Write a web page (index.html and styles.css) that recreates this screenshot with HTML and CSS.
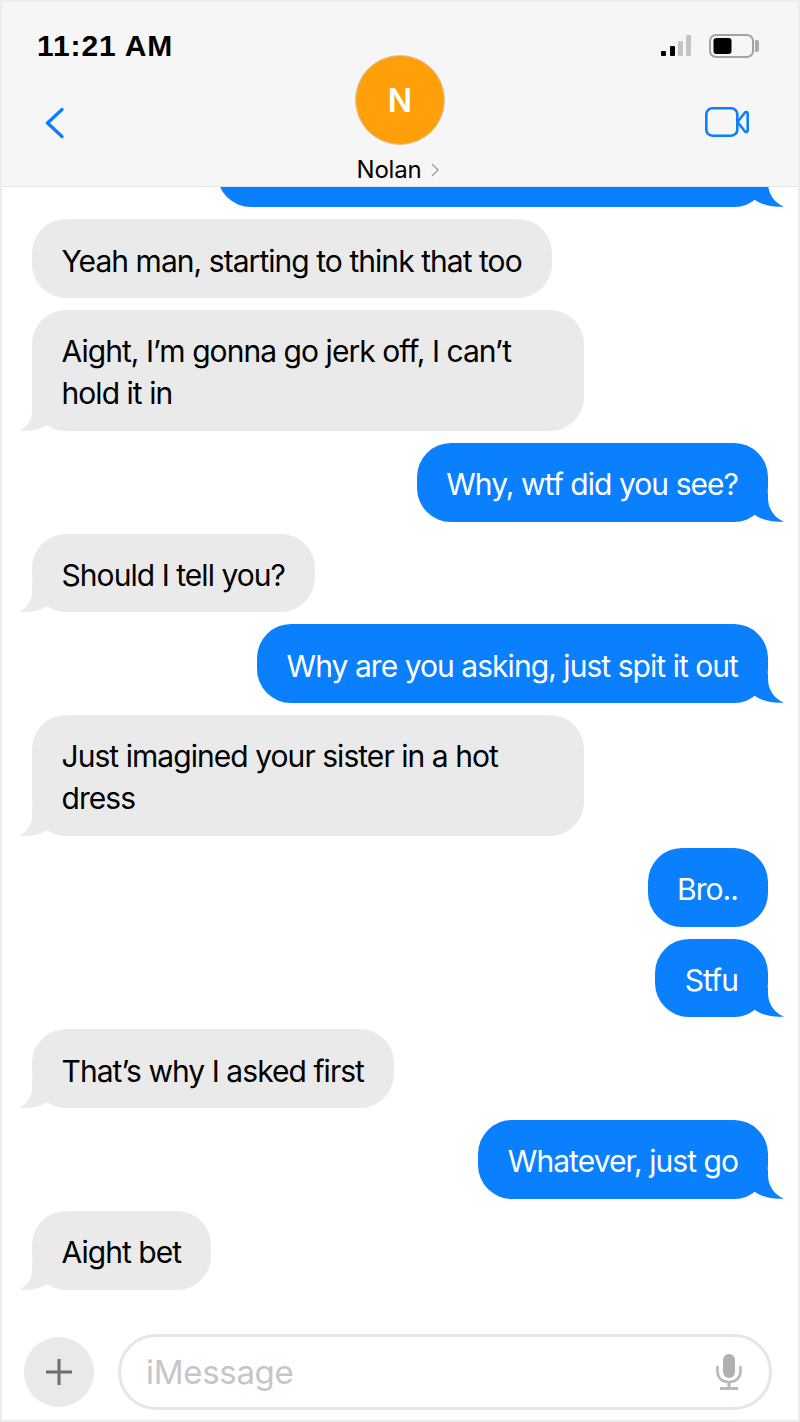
FILE: index.html
```html
<!DOCTYPE html>
<html lang="en">
<head>
  <meta charset="UTF-8" />
  <title>Nolan - Messages</title>
  <link rel="stylesheet" href="styles.css">
</head>
<body>
  <div class="phone">
    <!-- Top bar -->
    <header class="topbar">
      <div class="status">
        <span class="time">11:21 AM</span>
        <div class="status-icons">
          <svg width="30" height="22" viewBox="0 0 30 22">
            <rect x="0" y="16" width="5" height="5" rx="1" fill="#000" />
            <rect x="9" y="11" width="5" height="10" rx="1" fill="#000" />
            <rect x="17" y="6" width="5" height="15" rx="1" fill="#c4c4c4" />
            <rect x="25" y="0" width="5" height="21" rx="1" fill="#c4c4c4" />
          </svg>
          <svg width="50" height="24" viewBox="0 0 50 24">
            <rect x="1" y="1" width="43" height="22" rx="6" fill="none" stroke="#a3a3a3" stroke-width="2" />
            <rect x="4.500" y="4" width="18" height="16" rx="3" fill="#000" />
            <path d="M46 6h2a2 2 0 0 1 2 2v8a2 2 0 0 1-2 2h-2z" fill="#aaa" />
          </svg>
        </div>
      </div>
      <div class="nav">
        <svg class="nav-back" width="20" height="32" viewBox="0 0 20 32">
          <path d="M17 2.500L2.500 16L17 29.500" fill="none" stroke="#0a80ff" stroke-width="3.400" stroke-linecap="round" stroke-linejoin="round" />
        </svg>
        <div class="contact">
          <div class="avatar">N</div>
          <div class="contact-name">
            Nolan
            <svg width="8" height="14" viewBox="0 0 8 14">
              <path d="M1 1l6 6l-6 6" fill="none" stroke="#9a9a9a" stroke-width="1.300" />
            </svg>
          </div>
        </div>
        <svg class="nav-video" width="44" height="30" viewBox="0 0 44 30">
          <rect x="1.300" y="1.300" width="31" height="27.400" rx="6" fill="none" stroke="#0a80ff" stroke-width="2.600" />
          <path d="M32.500 15L40 5.500C41 4.500 42.700 5 42.700 6.500V23.500C42.700 25 41 25.500 40 24.500Z" fill="none" stroke="#0a80ff" stroke-width="2.600" stroke-linejoin="round" />
        </svg>
      </div>
    </header>

    <!-- Conversation -->
    <main class="thread">
      <div class="msg sent cut">&nbsp;<svg class="tail" width="34" height="30" viewBox="0 0 34 30"><path d="M18 0V6C18 16 24 26 34 29.500C26 30.500 13 29 5 23L0 15Z" /></svg></div>
      <div class="msg got">Yeah man, starting to think that too</div>
      <div class="msg got">Aight, I’m gonna go jerk off, I can’t hold it in<svg class="tail" width="30" height="30" viewBox="0 0 30 30"><path d="M12 0V10C12 18 8 25 0 29.500C10 30.500 20 29 27 24L30 15Z" /></svg></div>
      <div class="msg sent">Why, wtf did you see?<svg class="tail" width="34" height="30" viewBox="0 0 34 30"><path d="M18 0V6C18 16 24 26 34 29.500C26 30.500 13 29 5 23L0 15Z" /></svg></div>
      <div class="msg got">Should I tell you?<svg class="tail" width="30" height="30" viewBox="0 0 30 30"><path d="M12 0V10C12 18 8 25 0 29.500C10 30.500 20 29 27 24L30 15Z" /></svg></div>
      <div class="msg sent">Why are you asking, just spit it out<svg class="tail" width="34" height="30" viewBox="0 0 34 30"><path d="M18 0V6C18 16 24 26 34 29.500C26 30.500 13 29 5 23L0 15Z" /></svg></div>
      <div class="msg got">Just imagined your sister in a hot dress<svg class="tail" width="30" height="30" viewBox="0 0 30 30"><path d="M12 0V10C12 18 8 25 0 29.500C10 30.500 20 29 27 24L30 15Z" /></svg></div>
      <div class="msg sent">Bro..</div>
      <div class="msg sent">Stfu<svg class="tail" width="34" height="30" viewBox="0 0 34 30"><path d="M18 0V6C18 16 24 26 34 29.500C26 30.500 13 29 5 23L0 15Z" /></svg></div>
      <div class="msg got">That’s why I asked first<svg class="tail" width="30" height="30" viewBox="0 0 30 30"><path d="M12 0V10C12 18 8 25 0 29.500C10 30.500 20 29 27 24L30 15Z" /></svg></div>
      <div class="msg sent">Whatever, just go<svg class="tail" width="34" height="30" viewBox="0 0 34 30"><path d="M18 0V6C18 16 24 26 34 29.500C26 30.500 13 29 5 23L0 15Z" /></svg></div>
      <div class="msg got">Aight bet<svg class="tail" width="30" height="30" viewBox="0 0 30 30"><path d="M12 0V10C12 18 8 25 0 29.500C10 30.500 20 29 27 24L30 15Z" /></svg></div>
    </main>

    <!-- Input -->
    <footer class="composer">
      <div class="plus">
        <svg width="30" height="30" viewBox="0 0 30 30">
          <path d="M15 2V28M2 15H28" stroke="#6f6f6f" stroke-width="3" />
        </svg>
      </div>
      <div class="input">
        <span class="placeholder">iMessage</span>
        <svg width="26" height="36" viewBox="0 0 26 36">
          <rect x="7" y="0" width="12" height="24" rx="6" fill="#b0b0b0" />
          <path d="M1.500 13V17C1.500 24 6 28 13 28C20 28 24.500 24 24.500 17V13" fill="none" stroke="#b8b8b8" stroke-width="2.600" stroke-linecap="round" />
          <path d="M13 28V33M4 34.500H22" fill="none" stroke="#b8b8b8" stroke-width="3" />
        </svg>
      </div>
    </footer>
  </div>
</body>
</html>
```

FILE: styles.css
```css
* {
  box-sizing: border-box;
}

body {
  margin: 0;
  background: #fff;
  font-family: Inter, "Noto Sans", sans-serif;
}

.phone {
  display: flex;
  flex-direction: column;
  height: 1422px;
  border: 2px solid #eaecf0;
  overflow: hidden;
}

.topbar {
  flex: none;
  height: 185px;
  padding: 31px 39px 0 35px;
  background: #f6f6f6;
  border-bottom: 1px solid #e6e6e6;
  position: relative;
  z-index: 1;
}

.status {
  display: flex;
  justify-content: space-between;
  align-items: center;
  height: 26px;
  margin-bottom: -4px;
}

.time {
  font-family: "Liberation Sans", sans-serif;
  font-size: 30px;
  font-weight: 700;
  letter-spacing: 0.9px;
  color: #000;
}

.status-icons {
  display: flex;
  align-items: center;
  gap: 18px;
}

.nav {
  display: grid;
  grid-template-columns: 1fr auto 1fr;
  align-items: start;
  padding: 0 2px 0 7px;
  margin-left: -1px;
}

.nav-back {
  margin-top: 52px;
  margin-left: 2px;
}

.nav-video {
  margin-top: 52px;
  margin-right: 8px;
  justify-self: end;
}

.contact {
  display: flex;
  flex-direction: column;
  align-items: center;
}

.avatar {
  display: flex;
  justify-content: center;
  align-items: center;
  width: 90px;
  height: 90px;
  border-radius: 50%;
  border: 1px solid #d8c6a4;
  background: #ff9f0a;
  color: #fff;
  font-size: 32px;
  font-weight: 600;
}

.contact-name {
  display: flex;
  align-items: center;
  gap: 10px;
  margin-top: 10px;
  margin-right: 4px;
  font-size: 24px;
  letter-spacing: -0.2px;
  line-height: 30px;
  color: #000;
}

.thread {
  flex: 1;
  min-height: 0;
  display: flex;
  flex-direction: column;
  justify-content: flex-end;
  gap: 12px;
  padding: 0 30px 28.5px;
}

.msg {
  position: relative;
  flex: none;
  width: fit-content;
  max-width: 552px;
  padding: 20.375px 30px 16.375px 29.5px;
  border-radius: 34px;
  font-size: 30px;
  line-height: 42px;
  letter-spacing: -0.95px;
}

.msg.cut {
  width: 551px;
}

.msg.got {
  align-self: flex-start;
  background: #eaeaea;
  color: #000;
}

.msg.sent {
  align-self: flex-end;
  background: #0a80ff;
  color: #fff;
}

.tail {
  position: absolute;
  bottom: 0;
}

.msg.got .tail {
  left: -12px;
  fill: #eaeaea;
}

.msg.sent .tail {
  right: -16px;
  fill: #0a80ff;
}

.composer {
  flex: none;
  display: flex;
  align-items: center;
  gap: 24px;
  padding: 6px 26px 0 22px;
  height: 102px;
}

.plus {
  flex: none;
  display: flex;
  justify-content: center;
  align-items: center;
  width: 70px;
  height: 70px;
  border-radius: 50%;
  background: #e9e9e9;
}

.input {
  flex: 1;
  display: flex;
  justify-content: space-between;
  align-items: center;
  height: 76px;
  padding: 0 27px 0 25px;
  border: 3px solid #e6e6e8;
  border-radius: 38px;
}

.placeholder {
  font-size: 33px;
  letter-spacing: -0.3px;
  color: #c6c6c8;
}
```
